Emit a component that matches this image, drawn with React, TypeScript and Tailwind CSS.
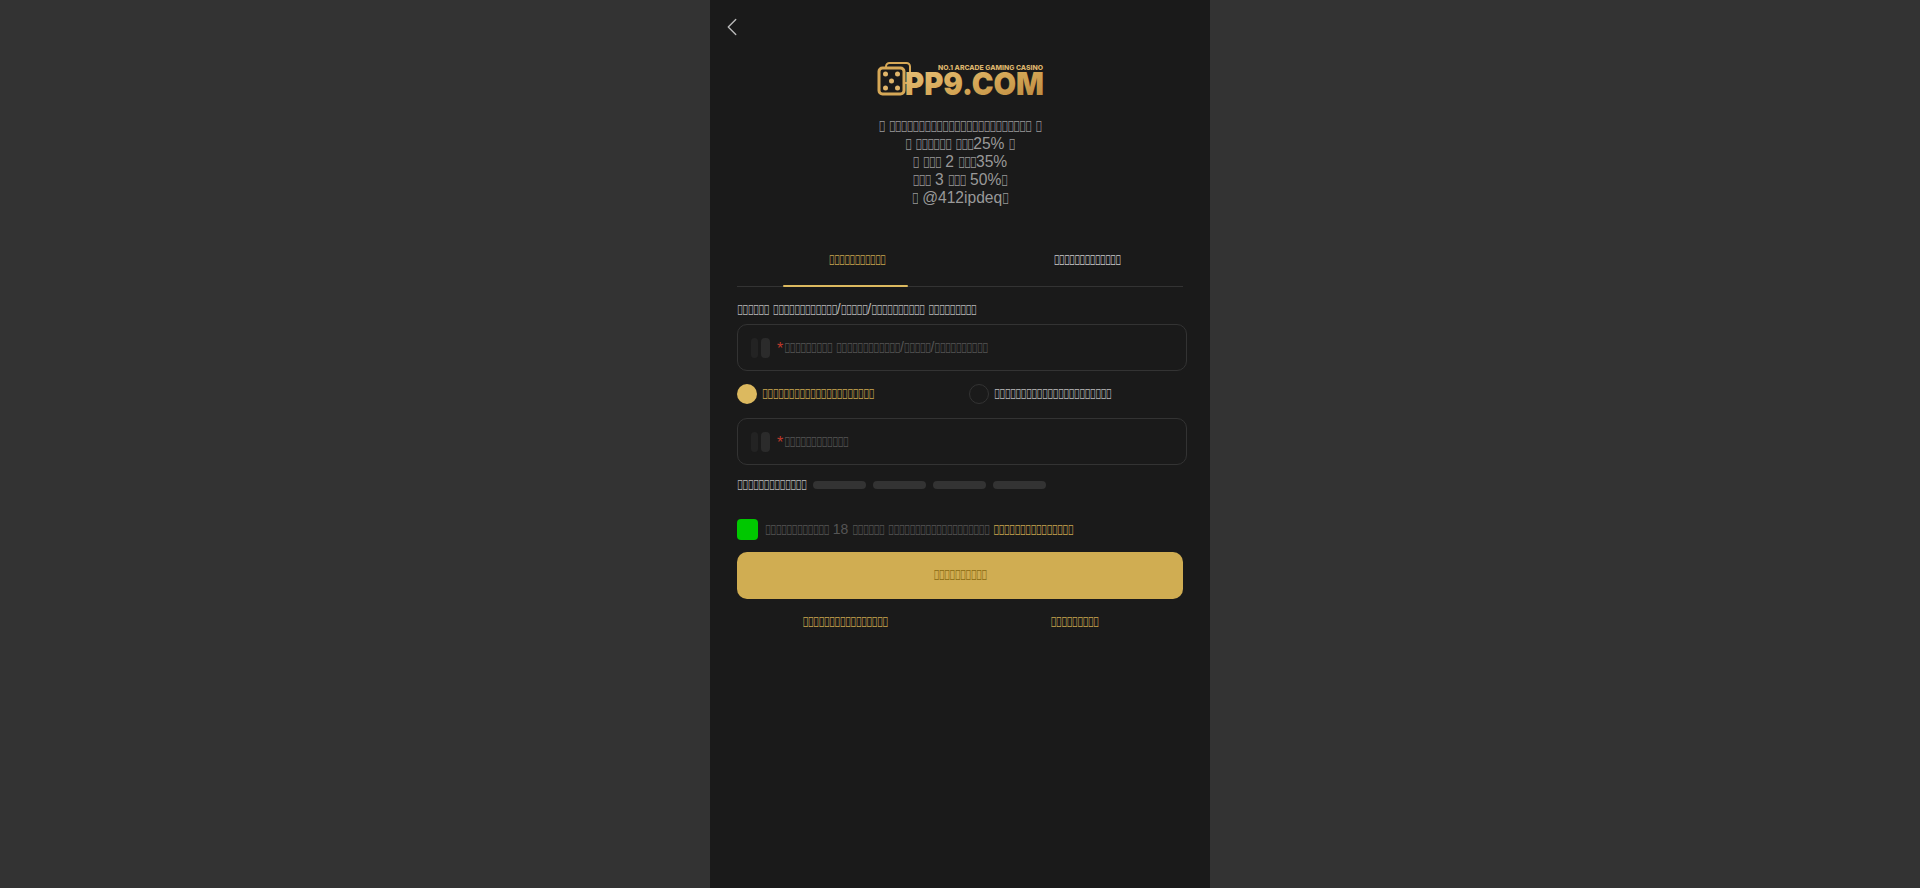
import { ChevronLeft } from "lucide-react";

// The reference only shows missing-glyph boxes here, the words themselves can't be read.
// So "#" stands for one box: it's a private use char that draws the font's tofu.
function T({ s }: { s: string }) {
  return (
    <>
      {s.split(/(#+)/).map((part, i) =>
        part.startsWith("#") ? (
          <span key={i} className="inline-block origin-center scale-y-[1.35] font-['Noto_Sans',sans-serif] text-[0.75em] leading-none tracking-[-0.093em]">
            {part.replace(/#/g, "\uE000")}
          </span>
        ) : (
          part
        )
      )}
    </>
  );
}

function Logo() {
  return (
    <svg width="170" height="38" viewBox="0 0 170 38" className="ml-[2px] block overflow-visible">
      <defs>
        <linearGradient id="gold" x1="0" y1="0" x2="1" y2="1">
          <stop offset="0" stopColor="#e9c27a" />
          <stop offset="0.5" stopColor="#d6a857" />
          <stop offset="1" stopColor="#b8863c" />
        </linearGradient>
      </defs>
      <rect x="10" y="3" width="24" height="20" rx="3.5" fill="none" stroke="#d6a857" strokeWidth="2" />
      <rect x="3" y="8" width="25" height="26" rx="3.5" fill="#1a1a1a" stroke="#d6a857" strokeWidth="3" />
      <circle cx="9.5" cy="14" r="2.5" fill="#e0b56a" />
      <circle cx="21.5" cy="14" r="2.5" fill="#e0b56a" />
      <circle cx="15.5" cy="21" r="2.5" fill="#e0b56a" />
      <circle cx="9.5" cy="28" r="2.5" fill="#e0b56a" />
      <circle cx="21.5" cy="28" r="2.5" fill="#e0b56a" />
      <text x="62" y="9.5" fontFamily="Inter, sans-serif" fontWeight="800" fontSize="6.6" fill="#dcb46c" textLength="105" lengthAdjust="spacingAndGlyphs">NO.1 ARCADE GAMING CASINO</text>
      <text x="29" y="35" fontFamily="Inter, sans-serif" fontWeight="900" fontSize="32" fill="url(#gold)" textLength="139" lengthAdjust="spacingAndGlyphs">PP9.COM</text>
    </svg>
  );
}

function Field({ placeholder }: { placeholder: string }) {
  return (
    <div className="flex h-[47px] w-[450px] items-center rounded-[10px] border border-[#333] pl-[13px]">
      <span className="h-[20px] w-[7px] rounded-[4px] bg-[#232323]" />
      <span className="ml-[3px] h-[20px] w-[9px] rounded-[4px] bg-[#2b2b2b]" />
      <span className="ml-[7px] mt-[3px] text-[16px] leading-none text-[#c0392b]">*</span>
      <span className="ml-px text-[14px] text-[#555]">
        <T s={placeholder} />
      </span>
    </div>
  );
}

export default function App() {
  return (
    <div className="flex min-h-screen justify-center bg-[#333] font-['Liberation_Sans',sans-serif]">
      <div className="h-[888px] w-[500px] overflow-hidden bg-[#1a1a1a] px-[27px]">
        <div className="-ml-[20px] flex h-[54px] items-center">
          <ChevronLeft size={30} strokeWidth={1.1} className="text-[#bbb]" />
        </div>
        <div className="mt-[6px] flex justify-center">
          <Logo />
        </div>
        <div className="mt-[19px] text-center text-[15.6px] leading-[18px] text-[#999]">
          <div><T s="# ######################## #" /></div>
          <div><T s="# ###### ###25% #" /></div>
          <div><T s="# ### 2 ###35%" /></div>
          <div><T s="### 3 ### 50%#" /></div>
          <div><T s="# @412ipdeq#" /></div>
        </div>

        <div className="relative mt-[24px] flex h-[56px] border-b border-[#333] text-[13.5px]">
          <div className="flex w-1/2 items-center justify-center pl-[17px] pt-[4px] text-[#c9a650]"><T s="###########" /></div>
          <div className="flex w-1/2 items-center justify-center pl-[31px] pt-[4px] text-[#ccc]"><T s="#############" /></div>
          <span className="absolute -bottom-px left-[46px] h-[2px] w-[125px] rounded-full bg-[#dcb95f]" />
        </div>

        <div className="mt-[14px] text-[14px] leading-[16px] text-[#bbb]"><T s="###### ############/#####/########## #########" /></div>
        <div className="mt-[7px]">
          <Field placeholder="######### ############/#####/##########" />
        </div>

        <div className="mt-[12px] flex items-center text-[14px]">
          <div className="flex w-[232px] items-center">
            <span className="h-[20px] w-[20px] rounded-full bg-[#dcb95f]" />
            <span className="ml-[5px] text-[#c9a650]"><T s="#####################" /></span>
          </div>
          <div className="flex items-center">
            <span className="h-[20px] w-[20px] rounded-full border border-[#333]" />
            <span className="ml-[5px] text-[#bbb]"><T s="######################" /></span>
          </div>
        </div>

        <div className="mt-[14px]">
          <Field placeholder="############" />
        </div>

        <div className="mt-[15px] flex items-center text-[14px] text-[#bbb]">
          <T s="#############" />
          <div className="ml-[7px] flex gap-[7px]">
            <span className="h-[8px] w-[53px] rounded-full bg-[#333]" />
            <span className="h-[8px] w-[53px] rounded-full bg-[#333]" />
            <span className="h-[8px] w-[53px] rounded-full bg-[#333]" />
            <span className="h-[8px] w-[53px] rounded-full bg-[#333]" />
          </div>
        </div>

        <div className="mt-[28px] flex items-center text-[14px] text-[#555]">
          <span className="h-[21px] w-[21px] rounded-[4px] bg-[#00c800]" />
          <span className="ml-[7px]">
            <T s="############ 18 ###### ################### " />
            <span className="text-[#c9a650]"><T s="###############" /></span>
          </span>
        </div>

        <button className="mt-[12px] flex h-[47px] w-full items-center justify-center rounded-[10px] bg-[#d0ad52] text-[14px] text-[#8a6a10]"><T s="##########" /></button>

        <div className="mt-[12px] flex text-[14px] text-[#c9a650]">
          <div className="w-[216px] text-center"><T s="################" /></div>
          <div className="w-[230px] pl-[13px] text-center"><T s="#########" /></div>
        </div>
      </div>
    </div>
  );
}
